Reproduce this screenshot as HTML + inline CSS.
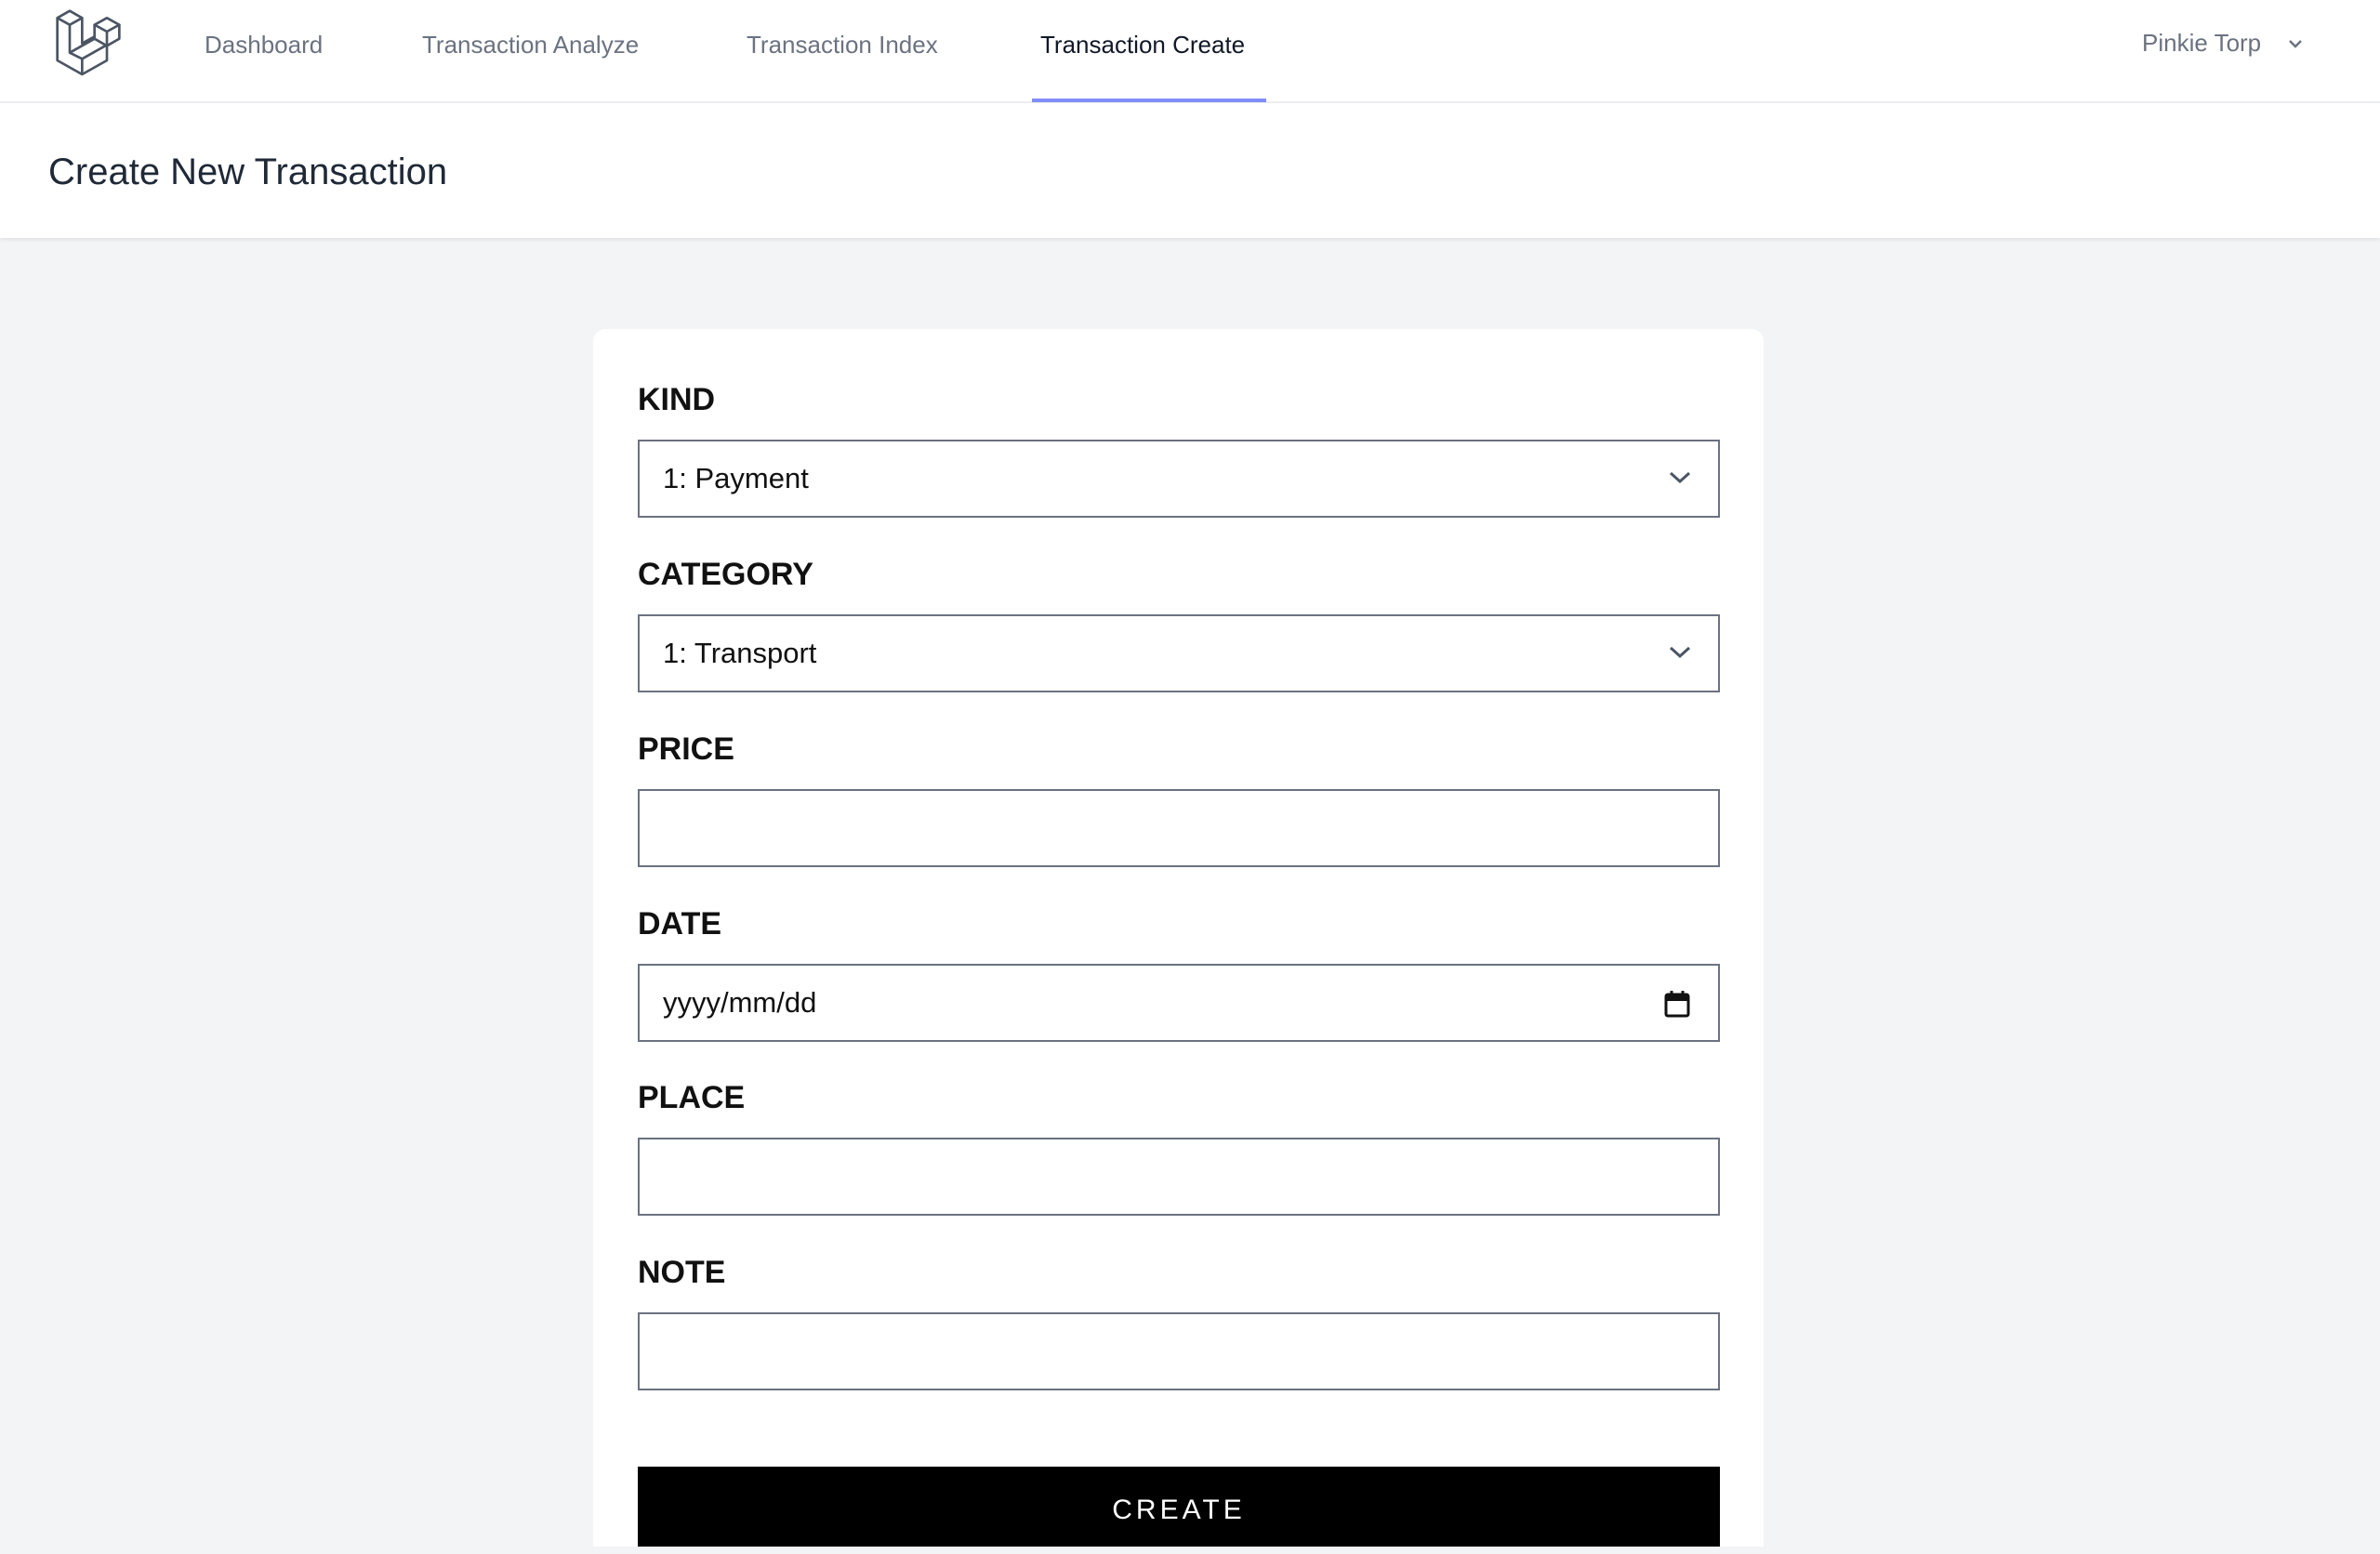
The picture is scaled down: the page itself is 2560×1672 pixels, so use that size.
<!DOCTYPE html>
<html><head><meta charset="utf-8"><style>
*{box-sizing:border-box;margin:0;padding:0}
html,body{width:2560px;height:1664px;overflow:hidden;background:#f3f4f6;font-family:"Liberation Sans",sans-serif}
nav{position:absolute;left:0;top:0;width:2560px;height:111px;background:#fff;border-bottom:2px solid #eceef1}
.lk{position:absolute;top:33px;font-size:26px;color:#6b7280;white-space:nowrap}
.act{color:#111827}
.ul{position:absolute;left:1110px;top:106px;width:252px;height:4px;background:#818cf8}
header{position:absolute;left:0;top:111px;width:2560px;height:145px;background:#fff;box-shadow:0 2px 4px rgba(0,0,0,.08)}
header h2{position:absolute;left:52px;top:52px;font-size:40px;font-weight:normal;color:#1f2937}
.card{position:absolute;left:638px;top:354px;width:1259px;height:1310px;background:#fff;border-radius:13px 13px 0 0}
.lb{position:absolute;left:686px;font-size:34px;font-weight:bold;color:#111;line-height:40px}
.in{position:absolute;left:686px;width:1164px;height:84px;border:2px solid #6b7280;background:#fff;font-size:31px;color:#111;padding-left:25px;line-height:80px}
.btn{position:absolute;left:686px;top:1578px;width:1164px;height:86px;background:#000;color:#fff;font-size:30px;letter-spacing:4px;text-align:center;line-height:94px}
</style></head><body>
<nav>
<svg style="position:absolute;left:50px;top:0" width="100" height="100" viewBox="0 0 300 300" fill="none" stroke="#4b5563" stroke-width="8" stroke-linejoin="round">
<path d="M35 58 L75 35 L115 58 L75 80 Z"/>
<path d="M35 58 L35 195 L115 240 L195 195 L195 102"/>
<path d="M75 80 L75 170 L115 190 L195 145"/>
<path d="M115 58 L115 140 L155 118"/>
<path d="M115 190 L115 240"/>
<path d="M75 170 L155 125"/>
<path d="M155 80 L195 58 L235 80 L195 102 Z"/>
<path d="M155 80 L155 125 L195 148 L235 125 L235 80"/>
</svg>
<div class="lk" style="left:220px">Dashboard</div>
<div class="lk" style="left:454px">Transaction Analyze</div>
<div class="lk" style="left:803px">Transaction Index</div>
<div class="lk act" style="left:1119px">Transaction Create</div>
<div class="ul"></div>
<div class="lk" style="left:2304px;top:31px">Pinkie Torp</div>
<svg style="position:absolute;left:2460px;top:40px" width="18" height="14" viewBox="0 0 18 14"><path d="M3 4 L9 10 L15 4" fill="none" stroke="#6b7280" stroke-width="2.5"/></svg>
</nav>
<header><h2>Create New Transaction</h2></header>
<div class="card"></div>
<div class="lb" style="top:410px">KIND</div>
<div class="in" style="top:473px">1: Payment<svg style="position:absolute;right:28px;top:30px" width="26" height="18" viewBox="0 0 26 18"><path d="M3 4 L13 13 L23 4" fill="none" stroke="#4b5563" stroke-width="3"/></svg></div>
<div class="lb" style="top:598px">CATEGORY</div>
<div class="in" style="top:661px">1: Transport<svg style="position:absolute;right:28px;top:30px" width="26" height="18" viewBox="0 0 26 18"><path d="M3 4 L13 13 L23 4" fill="none" stroke="#4b5563" stroke-width="3"/></svg></div>
<div class="lb" style="top:786px">PRICE</div>
<div class="in" style="top:849px"></div>
<div class="lb" style="top:974px">DATE</div>
<div class="in" style="top:1037px">yyyy/mm/dd<svg style="position:absolute;right:30px;top:26px" width="28" height="30" viewBox="0 0 28 30"><rect x="2" y="5" width="24" height="23" rx="2" fill="none" stroke="#111" stroke-width="3"/><rect x="2" y="5" width="24" height="7" fill="#111"/><path d="M8 1 V6 M20 1 V6" stroke="#111" stroke-width="3"/></svg></div>
<div class="lb" style="top:1161px">PLACE</div>
<div class="in" style="top:1224px"></div>
<div class="lb" style="top:1349px">NOTE</div>
<div class="in" style="top:1412px"></div>
<div class="btn">CREATE</div>
</body></html>
